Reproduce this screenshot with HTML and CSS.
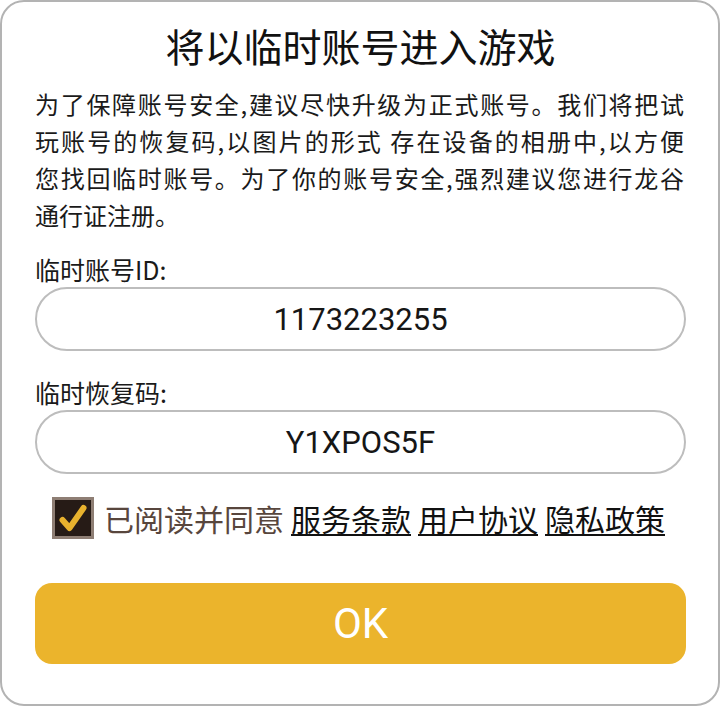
FILE: index.html
```html
<!DOCTYPE html>
<html lang="zh-CN">
<head>
<meta charset="utf-8">
<title>将以临时账号进入游戏</title>
<link rel="stylesheet" href="styles.css">
</head>
<body>
<div class="card">
  <h1 class="title">将以临时账号进入游戏</h1>
  <div class="desc">
    <span class="line jl">为了保障账号安全,建议尽快升级为正式账号。我们将把试</span>
    <span class="line jl">玩账号的恢复码,以图片的形式 存在设备的相册中,以方便</span>
    <span class="line jl">您找回临时账号。为了你的账号安全,强烈建议您进行龙谷</span>
    <span class="line">通行证注册。</span>
  </div>
  <div class="label label-first">临时账号ID:</div>
  <div class="field">1173223255</div>
  <div class="label">临时恢复码:</div>
  <div class="field">Y1XPOS5F</div>
  <div class="agree">
    <svg class="check" width="42" height="42" viewBox="0 0 42 42" aria-hidden="true">
      <rect x="1.5" y="1.5" width="39" height="39" fill="#261b16" stroke="#8e7e74" stroke-width="3"/>
      <path d="M10.5 23 L17.5 31 L31.5 11" fill="none" stroke="#e8b22e" stroke-width="6" stroke-linecap="round" stroke-linejoin="round"/>
    </svg>
    <span class="agree-text">已阅读并同意</span>
    <span class="link">服务条款</span>
    <span class="link">用户协议</span>
    <span class="link">隐私政策</span>
  </div>
  <div class="ok">OK</div>
</div>
</body>
</html>
```

FILE: styles.css
```css
html, body {
  margin: 0;
  padding: 0;
  background: #ffffff;
}

body {
  font-family: "Noto Sans CJK SC", "Noto Sans", sans-serif;
  color: #161616;
}

.card {
  box-sizing: border-box;
  width: 720px;
  height: 706px;
  border: 2px solid #b3b3b3;
  border-radius: 24px;
  background: #ffffff;
  padding: 18px 32px 0 33px;
  display: flex;
  flex-direction: column;
}

.title {
  margin: 0;
  font-size: 39px;
  line-height: 50px;
  font-weight: 400;
  text-align: center;
  color: #111111;
}

.desc {
  margin: 15px 2px 0 0;
  font-size: 24px;
  line-height: 37px;
  color: #1a1a1a;
}

.line {
  display: block;
}

.jl {
  text-align: justify;
  text-align-last: justify;
}

.label {
  margin-top: 24px;
  font-size: 25px;
  line-height: 34px;
  color: #1a1a1a;
}

.label-first {
  margin-top: 19px;
}

.field {
  box-sizing: border-box;
  margin-top: 1px;
  height: 64px;
  border: 2px solid #bdbdbd;
  border-radius: 32px;
  display: flex;
  align-items: center;
  justify-content: center;
  font-family: Roboto, "Noto Sans", sans-serif;
  font-size: 31px;
  color: #161616;
}

.agree {
  margin-top: 22px;
  height: 44px;
  display: flex;
  align-items: center;
  justify-content: center;
  gap: 7px;
  font-size: 30px;
  line-height: 44px;
  padding-right: 4px;
}

.check {
  flex: none;
  margin-right: 3px;
}

.agree-text {
  color: #58463d;
}

.link {
  color: #111111;
  text-decoration: underline;
  text-decoration-thickness: 2px;
  text-underline-offset: 3px;
}

.ok {
  margin-top: 43px;
  height: 81px;
  border-radius: 17px;
  background: #ebb42c;
  color: #ffffff;
  display: flex;
  align-items: center;
  justify-content: center;
  font-family: Roboto, "Noto Sans", sans-serif;
  font-size: 42px;
}
```
